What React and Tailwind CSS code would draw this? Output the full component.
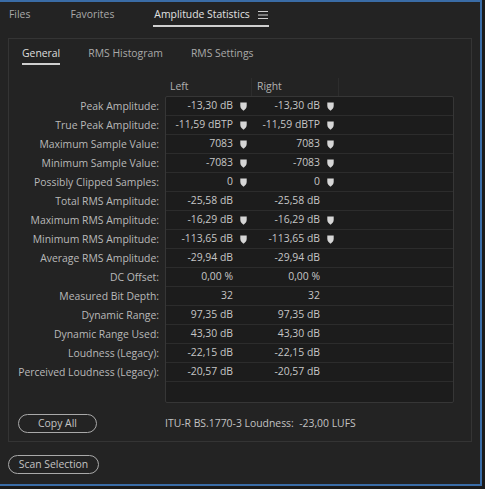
import React from 'react'

const ROWS = [
  { label: 'Peak Amplitude:', left: '-13,30 dB', right: '-13,30 dB', pin: true },
  { label: 'True Peak Amplitude:', left: '-11,59 dBTP', right: '-11,59 dBTP', pin: true },
  { label: 'Maximum Sample Value:', left: '7083', right: '7083', pin: true },
  { label: 'Minimum Sample Value:', left: '-7083', right: '-7083', pin: true },
  { label: 'Possibly Clipped Samples:', left: '0', right: '0', pin: true },
  { label: 'Total RMS Amplitude:', left: '-25,58 dB', right: '-25,58 dB' },
  { label: 'Maximum RMS Amplitude:', left: '-16,29 dB', right: '-16,29 dB', pin: true },
  { label: 'Minimum RMS Amplitude:', left: '-113,65 dB', right: '-113,65 dB', pin: true },
  { label: 'Average RMS Amplitude:', left: '-29,94 dB', right: '-29,94 dB' },
  { label: 'DC Offset:', left: '0,00 %', right: '0,00 %' },
  { label: 'Measured Bit Depth:', left: '32', right: '32' },
  { label: 'Dynamic Range:', left: '97,35 dB', right: '97,35 dB' },
  { label: 'Dynamic Range Used:', left: '43,30 dB', right: '43,30 dB' },
  { label: 'Loudness (Legacy):', left: '-22,15 dB', right: '-22,15 dB' },
  { label: 'Perceived Loudness (Legacy):', left: '-20,57 dB', right: '-20,57 dB' },
]

// little "go to" marker next to a value
function Pin() {
  return (
    <svg width="7" height="9" viewBox="0 0 7 9" className="block">
      <path d="M0.3 0.5 H6.7 V4 C6.7 6 5 7.6 3.5 8.7 C2 7.6 0.3 6 0.3 4 Z" fill="#d6d6d6" />
    </svg>
  )
}

function Cell({ value, pin }) {
  return (
    <div className="w-[87px] flex items-center">
      <span className="w-[68px] text-right pr-[1px] whitespace-nowrap">{value}</span>
      <span className="w-[19px] flex justify-center">{pin ? <Pin /> : null}</span>
    </div>
  )
}

export default function App() {
  return (
    <div
      className="w-[485px] h-[489px] bg-[#1a1a1a] text-[10.4px] text-[#b9b9b9]"
      style={{ fontFamily: '"Open Sans", "Noto Sans", sans-serif' }}
    >
      <div className="w-[482px] h-[486px] bg-[#232323] border-t-2 border-r-2 border-b-2 border-[#3a6ca6] flex flex-col">
        {/* panel tabs */}
        <div className="h-[27px] flex items-start pl-[9px] pt-[5px]">
          <span className="text-[#a9a9a9]">Files</span>
          <span className="ml-[40px] text-[#a9a9a9]">Favorites</span>
          <div className="ml-[40px] flex flex-col">
            <div className="flex items-center text-[#e2e2e2]">
              <span>Amplitude Statistics</span>
              <svg width="10" height="8" viewBox="0 0 10 8" className="ml-[8px]">
                <path d="M0 0.5 H10 M0 4 H10 M0 7.5 H10" stroke="#cfcfcf" strokeWidth="1" />
              </svg>
            </div>
            <div className="mt-[2px] h-[2px] w-[116px] -ml-[1px] bg-[#cfcfcf]" />
          </div>
        </div>

        {/* inner panel */}
        <div className="ml-[8px] mt-[9px] w-[464px] h-[404px] border border-[#343434] bg-[#232323] flex flex-col">
          {/* sub tabs */}
          <div className="flex items-start pl-[13px] pt-[7px] h-[39px]">
            <div className="flex flex-col">
              <span className="text-[#dedede]">General</span>
              <div className="mt-[1px] h-[2px] w-[38px] bg-[#cfcfcf]" />
            </div>
            <span className="ml-[28px] text-[#a9a9a9]">RMS Histogram</span>
            <span className="ml-[28px] text-[#a9a9a9]">RMS Settings</span>
          </div>

          {/* table */}
          <div className="flex">
            <div className="w-[156px] flex flex-col pt-[19px]">
              {ROWS.map(r => (
                <div key={r.label} className="h-[19px] flex items-center justify-end pr-[6px] whitespace-nowrap">
                  {r.label}
                </div>
              ))}
            </div>
            <div className="flex flex-col">
              <div className="h-[18px] flex">
                <div className="w-[87px] pl-[5px] border-r border-[#2d2d2d] text-[#b0b0b0] flex items-center">Left</div>
                <div className="w-[87px] pl-[5px] border-r border-[#2d2d2d] text-[#b0b0b0] flex items-center">Right</div>
              </div>
              <div className="w-[289px] h-[307px] border border-[#363636] rounded-[2px] bg-[#1c1c1c] flex flex-col text-[#c6c6c6]">
                {ROWS.map(r => (
                  <div key={r.label} className="h-[19px] flex border-b border-[#2c2c2c]">
                    <Cell value={r.left} pin={r.pin} />
                    <Cell value={r.right} pin={r.pin} />
                  </div>
                ))}
              </div>
            </div>
          </div>

          {/* footer */}
          <div className="flex items-center mt-[11px] pl-[9px]">
            <button className="w-[79px] h-[19px] rounded-full border-[1.5px] border-[#a9a9a9] text-[#c4c4c4] flex items-center justify-center">
              Copy All
            </button>
            <span className="ml-[68px] text-[#c2c2c2]">ITU-R BS.1770-3 Loudness:&nbsp; -23,00 LUFS</span>
          </div>
        </div>

        <div className="pl-[8px] mt-[13px]">
          <button className="w-[91px] h-[19px] rounded-full border-[1.5px] border-[#a9a9a9] text-[#c4c4c4] flex items-center justify-center">
            Scan Selection
          </button>
        </div>
      </div>
    </div>
  )
}
